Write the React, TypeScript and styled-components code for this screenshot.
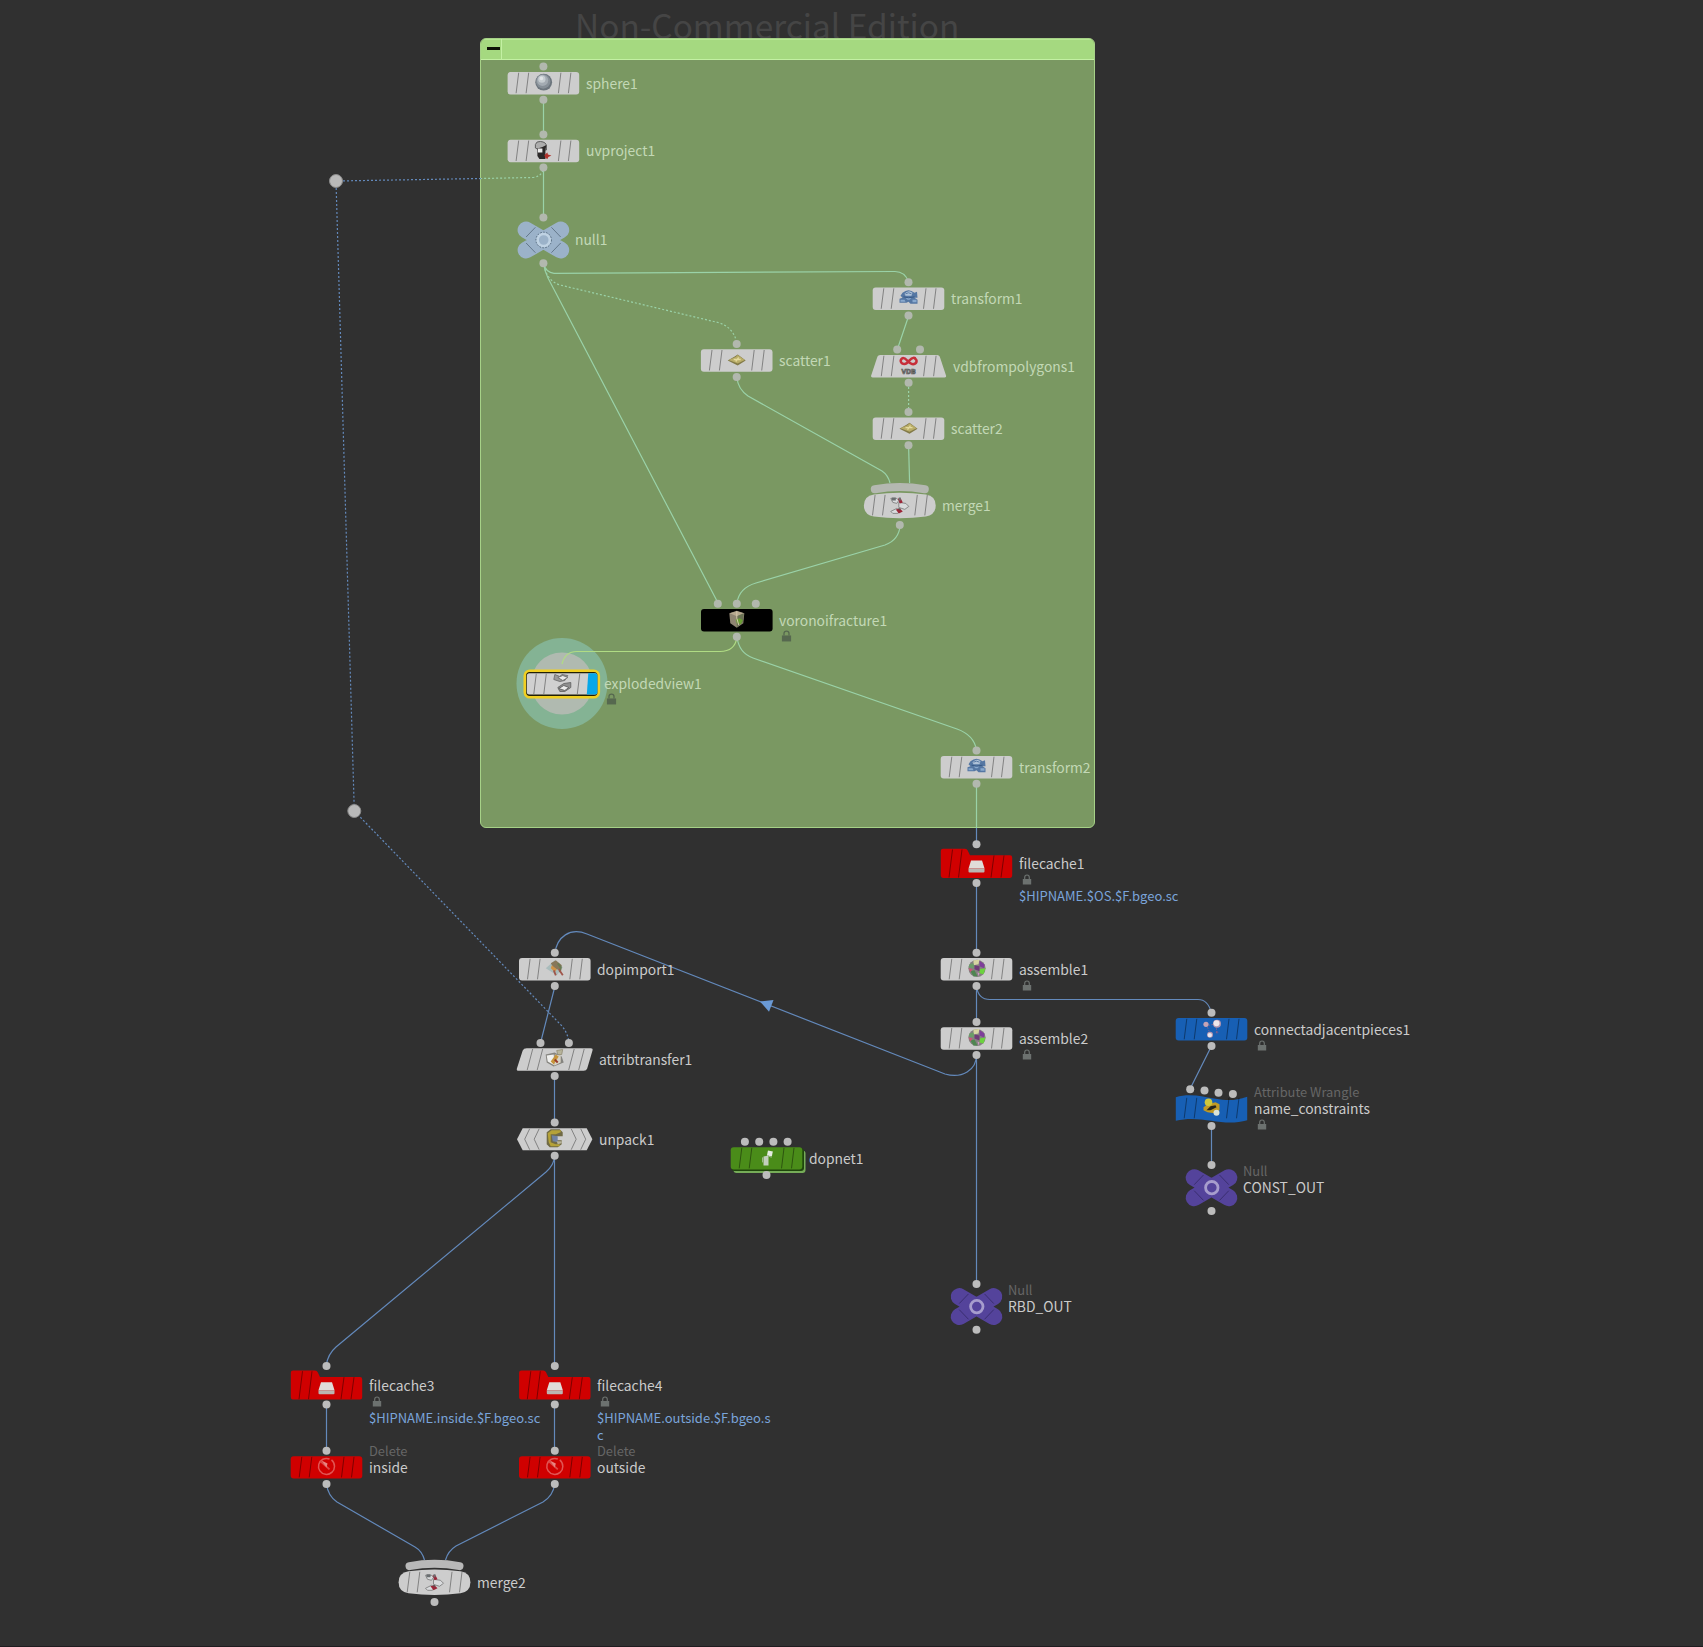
import type { ReactNode } from 'react';
import styled, { createGlobalStyle } from 'styled-components';

const GlobalStyle = createGlobalStyle`
  body {
    margin: 0;
    background: #303030;
    font-family: 'Noto Sans CJK JP', 'Noto Sans', sans-serif;
  }
`;

const Canvas = styled.main`
  position: relative;
  width: 1703px;
  height: 1646px;
  overflow: hidden;
  background: #303030;
  border-bottom: 1px solid #1f1b1f;
`;

const Watermark = styled.div`
  position: absolute;
  top: 0;
  left: 575px;
  font-size: 33.4px;
  line-height: 49px;
  color: #454545;
  white-space: nowrap;
`;

const NetworkBox = styled.section`
  position: absolute;
  left: 480px;
  top: 38px;
  width: 615px;
  height: 790px;
  box-sizing: border-box;
  border: 1px solid #a6d187;
  border-radius: 6px;
  background: #7a9862;
  overflow: hidden;
`;

const BoxHeader = styled.header`
  display: flex;
  height: 20px;
  background: #a5d980;
  border-bottom: 1px solid #c3f0a3;
  box-shadow: inset 0 1px 0 #b5e892;
`;

const CollapseButton = styled.button`
  display: flex;
  align-items: center;
  justify-content: center;
  width: 21px;
  padding: 0 0 0 4px;
  background: none;
  border: none;
  border-right: 1px solid #c3f0a3;
`;

const Minus = styled.span`
  width: 13px;
  height: 3px;
  margin-bottom: 1px;
  background: #0c1206;
`;

const WireLayer = styled.svg`
  position: absolute;
  inset: 0;
  width: 1703px;
  height: 1646px;
  fill: none;
`;

const Wire = styled.path<{ $tone?: 'box' | 'picked'; $dotted?: boolean }>`
  stroke: ${(props) => props.$tone === 'box' ? '#9ad2a8' : props.$tone === 'picked' ? '#b0dc84' : '#6389bb'};
  stroke-width: 1.2;
  stroke-dasharray: ${(props) => props.$dotted ? '2 2' : 'none'};
`;

const NodeItem = styled.div<{ $x: number; $y: number }>`
  position: absolute;
  left: ${(props) => props.$x}px;
  top: ${(props) => props.$y}px;
`;

const NodeShape = styled.svg`
  position: absolute;
  left: -50px;
  top: -50px;
  width: 100px;
  height: 100px;
`;

const NodeLabel = styled.div<{ $dx: number; $dy: number; $inBox: boolean }>`
  position: absolute;
  left: ${(props) => props.$dx}px;
  top: ${(props) => props.$dy}px;
  display: flex;
  flex-direction: column;
  width: 177px;
  color: ${(props) => props.$inBox ? '#c3d8b6' : '#cbcbcb'};
`;

const Kind = styled.span<{ $height: number }>`
  font-size: 12.9px;
  line-height: ${(props) => props.$height}px;
  color: #666;
`;

const Name = styled.span`
  font-size: 13.85px;
  line-height: 20px;
  white-space: nowrap;
`;

const LockIcon = styled.svg<{ $inBox: boolean }>`
  width: ${(props) => props.$inBox ? '11px' : '10px'};
  height: ${(props) => props.$inBox ? '12px' : '11px'};
  margin: ${(props) => props.$inBox ? '0 0 0 2px' : '1px 0 0 3px'};
  color: ${(props) => props.$inBox ? '#56684f' : '#6c716f'};
`;

const FilePath = styled.span`
  margin-top: 1.5px;
  font-size: 13px;
  line-height: 17px;
  color: #7aa4da;
  word-break: break-all;
`;

type Shape = 'rect' | 'null' | 'trapezoid' | 'merge' | 'folder' | 'slant' | 'hex' | 'wave' | 'net' | 'picked';

type NodeData = {
  name: string;
  x: number;
  y: number;
  icon?: string;
  shape?: Shape;
  fill?: string;
  kind?: string;
  path?: string;
  lock?: boolean;
  inBox?: boolean;
  dx?: number;
  inputs?: number[][];
  out?: number;
};

const RED = '#d00000';
const BLUE = '#175fb4';
const PURPLE = '#54439b';

const nodes: NodeData[] = [
  { name: 'sphere1', x: 543.4, y: 83.2, icon: 'sphere', inBox: true },
  { name: 'uvproject1', x: 543.4, y: 151, icon: 'uv', inBox: true },
  { name: 'null1', x: 543.4, y: 240, shape: 'null', fill: '#9bb2c9', inBox: true, dx: 31.6, inputs: [[0, -22.5]], out: 23.2 },
  { name: 'transform1', x: 908.5, y: 298.8, icon: 'transform', inBox: true },
  { name: 'scatter1', x: 736.7, y: 360.5, icon: 'scatter', inBox: true },
  { name: 'vdbfrompolygons1', x: 908.6, y: 366.2, icon: 'vdb', shape: 'trapezoid', inBox: true, dx: 44.6, inputs: [[-11.4, -16.8], [11.4, -16.8]] },
  { name: 'scatter2', x: 908.5, y: 428.7, icon: 'scatter', inBox: true },
  { name: 'merge1', x: 899.8, y: 505.4, icon: 'merge', shape: 'merge', inBox: true, inputs: [], out: 19.7 },
  { name: 'voronoifracture1', x: 736.8, y: 620.2, icon: 'voronoi', fill: '#000', lock: true, inBox: true, inputs: [[-19, -16.5], [0, -16.5], [19, -16.5]] },
  { name: 'explodedview1', x: 561.8, y: 683.5, icon: 'exploded', shape: 'picked', lock: true, inBox: true, inputs: [], out: 0 },
  { name: 'transform2', x: 976.5, y: 767.2, icon: 'transform', inBox: true },
  { name: 'filecache1', x: 976.5, y: 863.5, icon: 'disk', shape: 'folder', fill: RED, lock: true, path: '$HIPNAME.$OS.$F.bgeo.sc', inputs: [[0, -19.2]], out: 19.5 },
  { name: 'assemble1', x: 976.5, y: 969.3, icon: 'assemble', lock: true },
  { name: 'assemble2', x: 976.5, y: 1038.5, icon: 'assemble', lock: true },
  { name: 'connectadjacentpieces1', x: 1211.5, y: 1029.3, icon: 'connect', fill: BLUE, lock: true },
  { name: 'name_constraints', kind: 'Attribute Wrangle', x: 1211.5, y: 1108.3, icon: 'wrangle', shape: 'wave', fill: BLUE, lock: true, inputs: [[-21.3, -19], [-7, -17.8], [7, -15.5], [21.4, -14.3]], out: 17.7 },
  { name: 'CONST_OUT', kind: 'Null', x: 1211.5, y: 1187.7, shape: 'null', fill: PURPLE, dx: 31.6, inputs: [[0, -22.6]], out: 23.2 },
  { name: 'RBD_OUT', kind: 'Null', x: 976.5, y: 1306.6, shape: 'null', fill: PURPLE, dx: 31.6, inputs: [[0, -22.6]], out: 23.2 },
  { name: 'dopimport1', x: 554.8, y: 969.3, icon: 'dopimport' },
  { name: 'attribtransfer1', x: 554.7, y: 1059.5, icon: 'attrib', shape: 'slant', dx: 44.6, inputs: [[-14.2, -16.5], [14.2, -16.5]] },
  { name: 'unpack1', x: 554.7, y: 1139.2, icon: 'unpack', shape: 'hex', dx: 44.6 },
  { name: 'dopnet1', x: 766.5, y: 1158.4, icon: 'dopnet', shape: 'net', fill: '#4a8c19', inputs: [[-21.6, -16.6], [-7.3, -16.6], [6.9, -16.6], [21.1, -16.6]] },
  { name: 'filecache3', x: 326.5, y: 1385.2, icon: 'disk', shape: 'folder', fill: RED, lock: true, path: '$HIPNAME.inside.$F.bgeo.sc', inputs: [[0, -19.2]], out: 19.4 },
  { name: 'filecache4', x: 554.8, y: 1385.2, icon: 'disk', shape: 'folder', fill: RED, lock: true, path: '$HIPNAME.outside.$F.bgeo.sc', inputs: [[0, -19.2]], out: 19.4 },
  { name: 'inside', kind: 'Delete', x: 326.5, y: 1467.4, icon: 'delete', fill: RED },
  { name: 'outside', kind: 'Delete', x: 554.8, y: 1467.4, icon: 'delete', fill: RED },
  { name: 'merge2', x: 434.5, y: 1582.3, icon: 'merge', shape: 'merge', inputs: [], out: 19.8 },
];

const IconText = styled.text`
  font: bold 7px 'Open Sans', sans-serif;
  fill: #b9b9b9;
  stroke: #4f4f4f;
  stroke-width: 0.7px;
  text-anchor: middle;
`;

// all icons are drawn around 0,0 and fill roughly 17px
const icons: Record<string, ReactNode> = {
  sphere: (
    <>
      <circle cx="0.3" r="8.4" fill="#6c757d" />
      <circle cx="-0.2" cy="-0.7" r="7.2" fill="#868f97" />
      <circle cx="-0.8" cy="-1.8" r="5.6" fill="#a3abb2" />
      <circle cx="-1.5" cy="-3" r="3.6" fill="#c6cdd1" />
      <circle cx="-2" cy="-3.8" r="1.8" fill="#e0e4e6" />
    </>
  ),
  uv: (
    <>
      <path d="M-8-5.500Q-7-9-3-8.500 3-8 3-4V0H-4L-8-2Z" fill="#adadad" stroke="#5e5e5e" strokeWidth="1" />
      <path d="M-6-1.500V6l2 3H2V0L3-5-1-3Z" fill="#2c2929" />
      <path d="M-5.500-1.500H-1v4h-4.500Z" fill="#ececec" />
      <path d="M1 5 4 2.500 4.500 4.500 8 5.500 5 7 4 9 2 8Z" fill="#b1332d" />
    </>
  ),
  transform: (
    <>
      <path d="M-6-5Q0-10 6-5L8.500-6 9 0 6 0 9 2V6H2L0 4-2 5H-9V1L-6 0-8-2Z" fill="#5577a3" />
      <path d="M-4-4Q0-8.500 4-5L3-2H-3Z" fill="#afc2d8" />
      <path d="M-8 2H-4L-3 4H-8ZM4 2H8V4.500H4ZM-3 0H3L1 2H-1Z" fill="#89a9ce" />
      <path d="M-3-4Q0-6 3-4" stroke="#5a7ba5" fill="none" />
      <path d="M-5-1 0 0 6-1" stroke="#385a86" fill="none" />
    </>
  ),
  scatter: (
    <>
      <path d="M-9 1-2-3 1-5 9 1 1 6Z" fill="#827a48" />
      <path d="M-8 .5-1-2.500 1-4.500 8 .5 1 4Z" fill="#b9ad68" />
      <path d="M-3 0h7M-1 2l3-4" stroke="#e3d99c" strokeWidth="1.300" />
    </>
  ),
  vdb: (
    <>
      <path d="M7-6.800C2-10 0-1-4-1.200-8-1.300-9-5-6.500-6.800-3-9 0-1 4.500-1 9.500-1.500 8.500-7 5.500-6.500" fill="none" stroke="#c72f3a" strokeWidth="2.500" />
      <IconText x="0" y="8.5">VDB</IconText>
    </>
  ),
  merge: (
    <>
      <path d="M-9-7h6l2 2-2 3-4-1ZM-1-3l7 1 3 3-4 3-6-2ZM-9 6l6-3 3 2-2 3h-5Z" fill="#d9dbdd" stroke="#777" strokeWidth=".8" />
      <path d="M-2-7H1L3-3 0-2ZM-4 4 0 3l3 3-4 2Z" fill="#9b2638" />
      <path d="M-8-8h4v3h-4ZM-1-8H1V-5H-1Z" fill="#6a6e70" />
      <path d="M-2 3 1 3 0 5Z" fill="#555" />
    </>
  ),
  voronoi: (
    <>
      <path d="M0-8.500 7.500-6 6.500 4 0 8.500-6.500 4-7.500-6Z" fill="#8f8572" />
      <path d="M0-8 7-6 0-3-7-6Z" fill="#b7a98f" />
      <path d="M0-3 7-6 6 3 0 8Z" fill="#697153" />
      <path d="M-1 0 3-1 6 1 4 5 0 4Z" fill="#6b9e35" />
      <path d="M0-8V-1L2 6" stroke="#d4c7ac" fill="none" />
    </>
  ),
  exploded: (
    <>
      <path d="M-7-9-2-7 0-9 6-8 3-3-2-2-8-4Z" fill="#9a9a9a" stroke="#666" strokeWidth=".8" />
      <path d="M-4-6 1-8 6-6 1-3Z" fill="#e9e9e9" stroke="#666" strokeWidth=".8" />
      <path d="M-4 4 2 0 9-1V4L3 8-2 8Z" fill="#8f8f8f" stroke="#5d5d5d" strokeWidth=".8" />
      <path d="M-3 5 2 2 7 4 3 7Z" fill="#ececec" stroke="#555" strokeWidth=".8" />
    </>
  ),
  disk: (
    <>
      <path d="M-5.500-2h11L8 6H-8Z" fill="#e0dcd9" />
      <path d="M-8 6H8v3q0 1-1 1H-7q-1 0-1-1Z" fill="#bbb4b1" />
    </>
  ),
  assemble: (
    <>
      <circle cx=".5" r="8.600" fill="#84817f" />
      <path d="M-3-8 3-8.500 2-4-3-3Z" fill="#d6d5a2" />
      <path d="M3-7.500 8-4 7.500 0 3-2Z" fill="#7e3e9b" />
      <path d="M3 1 9 0 7 6 3 5Z" fill="#6cd33f" />
      <path d="M-7-4-3-5-2 0-8-1Z" fill="#6b9c68" />
      <path d="M-6 3-2 2 1 8-3 8Z" fill="#4f8650" />
      <path d="M-2-3 3-2 3 3-2 1Z" fill="#6f3b78" />
      <path d="M-8 0-4 1-6 4Z" fill="#ce5377" />
      <path d="M1 4 3 5 2 8Z" fill="#d09ac4" />
    </>
  ),
  connect: (
    <>
      <circle cx="-5.500" cy="-4" r="2.600" fill="#c5a3b4" />
      <circle cx="5.500" cy="-4.500" r="4" fill="#b597b0" />
      <circle cx="5" cy="-5" r="3" fill="#efe7ea" />
      <circle cx="-1.500" cy="6.500" r="3" fill="#b597b0" />
      <circle cx="-1.700" cy="6.800" r="2.200" fill="#e8e6ef" />
      <circle cx="5.500" cy="4" r="1.200" fill="#5d5a97" />
      <path d="M-3-3 2-4M5 0v5M-4-1-2 4" stroke="#7c638f" strokeDasharray="1.500 1.500" />
    </>
  ),
  wrangle: (
    <>
      <path d="M-8 0-4-3 4-5 8-3 8 3 3 6-4 5-8 3Z" fill="#c19a24" />
      <path d="M-5 3-1-1 4-2 5 0-1 3Z" fill="#27251b" />
      <circle cx="-3" cy="-5" r="3.800" fill="#cfc83b" />
      <circle cx="5" cy="5.500" r="3" fill="#d9e3d8" />
    </>
  ),
  dopimport: (
    <>
      <path d="M-9 0 0-8 8-1 2 7Z" fill="#a9bcbc" />
      <path d="M-4-5 1-8 7-3 5 2-1 0Z" fill="#87775a" />
      <path d="M-3-3 2 1 0 4-4 0Z" fill="#d09347" />
      <path d="M3-5 6-1 5 4" fill="none" stroke="#6b7a52" strokeWidth="2" />
      <path d="M-1 2 1 7M4 1 8 7" stroke="#a0564b" strokeWidth="1.800" />
    </>
  ),
  attrib: (
    <>
      <path d="M-9-4 0-6 7-2 9 4-1 8-8 4Z" fill="#85847f" />
      <path d="M-8-3-1-4 0 7-7 3Z" fill="#f0f0ee" />
      <path d="M0-4 6-3 6 4 0 7Z" fill="#d8d3c5" />
      <path d="M-4 3 1-4 4-2-1 6Z" fill="#c6953c" />
      <path d="M0 1 3 4" stroke="#9a392a" strokeWidth="2" />
      <path d="M2-8 8-9 7-4 3-4Z" fill="#b7b49b" stroke="#8a846a" strokeWidth=".7" />
    </>
  ),
  unpack: (
    <>
      <path d="M-8-6-4-9H5L8-6V-2H1V2H7V6L3 9H-5L-8 6Z" fill="#706a45" />
      <path d="M-7-5-3-8H6V-6L1-4H-4V4L1 6H5V8H-4L-6 4Z" fill="#b5a238" />
      <path d="M-3-3 3-2V4L-2 3Z" fill="#7082a3" />
      <path d="M2 3H7V5L3 6Z" fill="#b9b59b" />
    </>
  ),
  dopnet: (
    <>
      <path d="M-3-1 2-2V8H-3Z" fill="#c3cfbe" />
      <rect x="0" y="-7" width="5" height="5" fill="#e6ece2" transform="rotate(12)" />
      <path d="M-4 0V5M1-2 5 0" stroke="#9bb98a" />
    </>
  ),
  delete: (
    <>
      <path d="M3-7.400A8 8 0 1 0 8 0M8 0Q8-4 5-6.500" fill="none" stroke="#e05654" strokeWidth="1.500" />
      <path d="M-6-5 3 3" stroke="#dc4a48" strokeWidth="1.800" />
      <path d="M-5-6 1-3 0 1Z" fill="#e88582" />
    </>
  ),
};

const outlines: Record<string, string> = {
  trapezoid: 'M-28.5-11.300H28.500Q30.500-11.300 31.200-9.500L37.500 9.500Q38 11.200 36 11.200H-36Q-38 11.200-37.500 9.500L-31.200-9.500Q-30.500-11.300-28.500-11.300Z',
  folder: 'M-33.500-14.700H-11.500Q-9.500-14.700-8.800-13L-6.500-8.300H33.500Q35.700-8.300 35.700-6V12Q35.700 14.400 33.500 14.400H-33.500Q-35.700 14.400-35.700 12V-12.500Q-35.700-14.700-33.500-14.700Z',
  slant: 'M-28-11.300H36Q38.500-11.300 37.800-9L32.500 9Q31.700 11.300 29 11.300H-36Q-38.500 11.300-37.800 9L-32-9Q-31-11.300-28-11.300Z',
  hex: 'M-32-11H32L37.700 0 32 11H-32L-37.700 0Z',
  wave: 'M-35.700-11C-22-15.500-8-11.500 4-9.500S24-7.500 35.700-11.500V12C24 15.500 12 14.500 0 12.500S-24 9.500-35.700 12.500Z',
  merge: 'M-26-11Q0-14.500 26-11 35.900-9.500 35.900 0 35.900 9.500 26 11 0 14.500-26 11-35.900 9.500-35.900 0-35.900-9.500-26-11Z',
};

const STRAIGHT_TICKS = 'M-24.700-10.500-27.300 10M-14.700-10.500-17.300 10M17.500-10.500 15 10M27.500-10.500 25 10';

const tickPaths: Record<string, string> = {
  hex: 'M-25-10.500-30 0-25 10.500M-15.500-10.500-20.500 0-15.500 10.500M16.500-10.500 21.500 0 16.500 10.500M26-10.500 31 0 26 10.500',
  slant: 'M-22-10.500-27.500 10.500M-12-10.500-17.500 10.500M19.500-10.500 14 10.500M29.500-10.500 24 10.500',
  folder: 'M-24-14-27.500 14M-14.500-14-18 14M17.500-8 14.500 14M27.500-8 24.500 14',
  picked: 'M-25.500-10-28 10.500M-15.500-10-18 10.500M18-10 15.500 10.500',
};

const NodeBody = ({ shape = 'rect', fill = '#cdcdcd', inBox }: NodeData) => {
  const pale = fill === '#cdcdcd';
  const ticks = <path d={tickPaths[shape] || STRAIGHT_TICKS} fill="none" stroke={pale ? '#828282' : '#000'} strokeOpacity={pale ? 1 : 0.4} strokeWidth="1" />;

  if (shape === 'null') {
    return (
      <>
        <path d="M-17.300-10 17.300 10M17.300-10-17.300 10" stroke={fill} strokeWidth="17" strokeLinecap="round" />
        <path d="M-8-12.700-17.300-3M8-12.700 17.300-3M-8 12.700-17.300 3M8 12.700 17.300 3" stroke={inBox ? '#65798c' : '#3a2e70'} strokeWidth="1" />
        <circle cx=".3" r="6.200" fill="none" stroke={inBox ? '#bfd2e3' : '#a79dcd'} strokeWidth="2.800" />
        {inBox && <circle cx=".3" r="7.800" fill="none" stroke="#54697c" strokeWidth="1" strokeDasharray="1.500 1.500" />}
      </>
    );
  }
  if (shape === 'picked') {
    return (
      <>
        <rect x="-37" y="-12.700" width="74" height="26.400" rx="5" fill="#222005" stroke="#f1cf22" strokeWidth="2.600" />
        <rect x="-35" y="-10.200" width="70.500" height="21.300" rx="2.500" fill="#d0d0d0" />
        <path d="M26.500-10.200H33Q35.500-10.200 35.500-8V9Q35.500 11.100 33 11.100H25Z" fill="#08a7e8" />
        {ticks}
      </>
    );
  }
  return (
    <>
      {shape === 'merge' && <path d="M-25-16.200Q0-20.800 25-16.200" fill="none" stroke={inBox ? '#b4b8b1' : '#b8b8b8'} strokeWidth="8" strokeLinecap="round" />}
      {shape === 'net' && (
        <>
          <rect x="-33" y="-8" width="72" height="22.500" rx="3" fill="#76ac58" />
          <rect x="-35" y="-10" width="72.500" height="22.700" rx="3" fill="#1f450c" />
        </>
      )}
      {outlines[shape]
        ? <path d={outlines[shape]} fill={fill} />
        : <rect x="-35.800" y="-11.200" width="71.600" height="22.400" rx="3" fill={fill} />}
      {fill !== '#000' && ticks}
    </>
  );
};

const NetworkNode = (props: NodeData) => {
  const { name, x, y, icon, shape, kind, path, lock, inBox = false, dx = 42.6, inputs = [[0, -16.6]], out = 16.6 } = props;
  const portFill = inBox ? '#b2b8ae' : '#bcbcbc';
  const iconY = shape === 'picked' || shape === 'merge' ? 0 : -1;
  const kindHeight = shape === 'null' ? 12 : 13;

  // the item sits on a whole pixel, the fraction is applied inside the svg
  const left = Math.floor(x);
  const top = Math.floor(y);
  const fx = x - left;
  const fy = y - top;

  return (
    <NodeItem $x={left} $y={top}>
      <NodeShape viewBox="-50 -50 100 100">
        <g transform={`translate(${fx} ${fy})`}>
          <NodeBody {...props} />
          {icon && <g transform={`translate(0 ${iconY})`}>{icons[icon]}</g>}
          {inputs.map(([cx, cy]) => <circle key={cx} cx={cx} cy={cy} r="4" fill={portFill} />)}
          {out > 0 && <circle cy={out} r="4" fill={portFill} />}
        </g>
      </NodeShape>
      <NodeLabel $dx={Math.round(fx + dx - 0.1)} $dy={Math.round(fy - 10.6) - (kind ? kindHeight : 0)} $inBox={inBox}>
        {kind && <Kind $height={kindHeight}>{kind}</Kind>}
        <Name>{name}</Name>
        {lock && (
          <LockIcon viewBox="0 0 10 11" $inBox={inBox}>
            <path d="M2.700 5V3.300a2.300 2.300 0 0 1 4.600 0V5" fill="none" stroke="currentColor" strokeWidth="1.200" />
            <rect x=".8" y="5" width="8.400" height="5.500" fill="currentColor" />
          </LockIcon>
        )}
        {path && <FilePath>{path}</FilePath>}
      </NodeLabel>
    </NodeItem>
  );
};

const App = () => {
  return (
    <>
      <GlobalStyle />
      <Canvas>
        <Watermark>Non-Commercial Edition</Watermark>
        <NetworkBox>
          <BoxHeader>
            <CollapseButton aria-label="Collapse"><Minus /></CollapseButton>
          </BoxHeader>
        </NetworkBox>

        <WireLayer viewBox="0 0 1703 1646">
          {/* display halo */}
          <circle cx="562" cy="683.500" r="45.500" fill="#84b394" />
          <circle cx="562" cy="683.500" r="31" fill="#b0bab0" />

          {/* inside the network box */}
          <Wire $tone="box" d="M543.500 100V134M543.500 168V217" />
          <Wire $tone="box" $dotted d="M543 170Q541 177 532 177.500L481 178.500" />
          <Wire $tone="box" d="M543.500 264Q546 272.500 554 273.300L895 271.500Q905 271.500 908.600 282" />
          <Wire $tone="box" $dotted d="M544 265Q547 281 560 285L718 322.500Q734 327 737 344" />
          <Wire $tone="box" d="M544 265Q544.500 271 548 278L717 601" />
          <Wire $tone="box" d="M737 378Q738 389 748 396L882 471Q888 475 890 483" />
          <Wire $tone="box" d="M908.600 316 897.500 349M908.600 446 909.600 483" />
          <Wire $tone="box" $dotted d="M908.600 383V412" />
          <Wire $tone="box" d="M900.200 525Q899 540 885 545L756 583Q739 588 737 603" />
          <Wire $tone="picked" d="M737 637Q735 651.500 720 651.500H577Q565 651.500 562 664" />
          <Wire $tone="box" d="M737 637Q739 653 753 658L957 729Q974 735 976.500 750" />
          <Wire $tone="box" d="M976.500 784V828" />

          {/* outside */}
          <Wire d="M976.500 828V844M976.500 883V953M976.500 986V1022M976.500 1055V1284" />
          <Wire d="M976.500 986Q978 999.500 990 999.500H1198Q1208 999.500 1211.500 1013" />
          <Wire d="M1211.500 1046 1190 1089M1211.500 1126V1165" />
          <Wire d="M976.500 1055C976.500 1070 962 1079 945 1074L587 934C570 927 557 937 555 953" />
          <path d="M760 1001.500 773.500 1000 769 1011.800Z" fill="#6a9ad6" />
          <Wire d="M555 986 540.500 1043M554.500 1076V1122M554.500 1156V1365M554.500 1404V1450" />
          <Wire d="M554.800 1156Q554 1165 546 1172L336 1347Q328 1354 326.300 1365" />
          <Wire d="M326.500 1404V1450M326.500 1484Q328 1496 337 1502L415 1547Q422 1551 424.500 1560" />
          <Wire d="M554.800 1484Q553 1496 543 1502L456 1546Q448 1551 445.500 1560" />
          <Wire $dotted d="M481 178.500 336 181 354.300 811 560 1024Q568 1032 569 1043" />

          <circle cx="336" cy="181" r="6.500" fill="#b9b9b9" stroke="#8a8a8a" />
          <circle cx="354.300" cy="811" r="6.500" fill="#b9b9b9" stroke="#8a8a8a" />
        </WireLayer>

        {nodes.map((node) => <NetworkNode key={node.name} {...node} />)}
      </Canvas>
    </>
  );
};

export default App;
